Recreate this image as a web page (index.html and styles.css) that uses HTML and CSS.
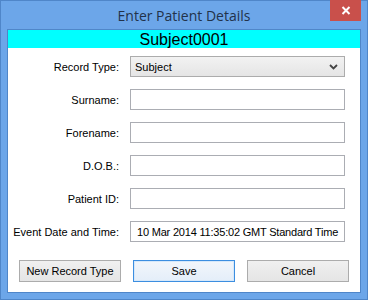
FILE: index.html
```html
<!DOCTYPE html>
<html>
<head>
<meta charset="utf-8">
<link rel="stylesheet" href="styles.css">
</head>
<body>
<div class="window">
  <div class="titlebar">
    <div class="title">Enter Patient Details</div>
    <div class="close">
      <svg width="10" height="9" viewBox="0 0 10 9"><path d="M1.5 1 L8.5 8 M8.5 1 L1.5 8" stroke="#fff" stroke-width="2" fill="none"/></svg>
    </div>
  </div>
  <div class="client">
    <div class="banner">Subject0001</div>
    <div class="form">
      <label class="lbl">Record Type:</label>
      <div class="select"><span>Subject</span>
        <svg class="chev" width="9" height="6" viewBox="0 0 9 6"><path d="M1 1 L4.5 4.5 L8 1" stroke="#444" stroke-width="1.8" fill="none"/></svg>
      </div>
      <label class="lbl">Surname:</label>
      <div class="input"></div>
      <label class="lbl">Forename:</label>
      <div class="input"></div>
      <label class="lbl">D.O.B.:</label>
      <div class="input"></div>
      <label class="lbl">Patient ID:</label>
      <div class="input"></div>
      <label class="lbl">Event Date and Time:</label>
      <div class="input tight">10 Mar 2014 11:35:02 GMT Standard Time</div>
    </div>
    <div class="buttons">
      <div class="btn">New Record Type</div>
      <div class="btn default">Save</div>
      <div class="btn">Cancel</div>
    </div>
  </div>
</div>
</body>
</html>
```
FILE: styles.css
```css
html, body { margin: 0; padding: 0; background: #fff; }
body { width: 368px; height: 300px; overflow: hidden; }
.window {
  box-sizing: border-box;
  width: 368px; height: 300px;
  border: 1px solid #4f86c9;
  background: #6ca6e9;
  padding: 0 6px 6px 6px;
  display: flex; flex-direction: column;
}
.titlebar {
  height: 28px;
  position: relative;
  display: flex; align-items: center; justify-content: center;
}
.title {
  font-family: "Open Sans", "Noto Sans", sans-serif;
  font-size: 14px;
  color: #22324a;
  margin-top: 1px;
}
.close {
  position: absolute; right: 0; top: -1px;
  width: 31px; height: 21px;
  background: #c9504b;
  display: flex; align-items: center; justify-content: center;
}
.client {
  flex: 1;
  background: #fff;
  border: 1px solid #4f86c9;
  display: flex; flex-direction: column;
}
.banner {
  height: 18px;
  background: #00ffff;
  font-family: "Liberation Sans", Arial, sans-serif;
  font-size: 16px;
  line-height: 19px;
  text-align: center;
  color: #000;
}
.form {
  margin-top: 8px;
  display: grid;
  grid-template-columns: 111px 215px;
  column-gap: 11px;
  row-gap: 12px;
  grid-auto-rows: 21px;
}
.lbl {
  font-family: "Liberation Sans", Tahoma, sans-serif;
  font-size: 11px;
  color: #000;
  text-align: right;
  align-self: center;
  white-space: nowrap;
}
.input, .select {
  box-sizing: border-box;
  border: 1px solid #abadb3;
  background: #fff;
  font-family: "Liberation Sans", Tahoma, sans-serif;
  font-size: 11px;
  color: #000;
  padding-left: 6px;
  display: flex; align-items: center;
  white-space: nowrap;
  overflow: hidden;
}
.input.tight { letter-spacing: -0.2px; }
.select {
  background: linear-gradient(#f2f2f2, #e5e5e5);
  border-color: #acacac;
  padding-left: 4px;
  justify-content: space-between;
  padding-right: 6px;
}
.buttons {
  margin-top: 18px;
  padding: 0 11px;
  display: grid;
  grid-template-columns: repeat(3, 102px);
  column-gap: 12px;
}
.btn {
  box-sizing: border-box;
  height: 22px;
  border: 1px solid #acacac;
  background: linear-gradient(#f0f0f0, #e5e5e5);
  font-family: "Liberation Sans", Tahoma, sans-serif;
  font-size: 11px;
  display: flex; align-items: center; justify-content: center;
  color: #000;
}
.btn.default {
  border-color: #3c8ee0;
  background: linear-gradient(#f2f6fb, #e4eef9);
  box-shadow: inset 0 0 0 1px #d6e8fa;
}
```
